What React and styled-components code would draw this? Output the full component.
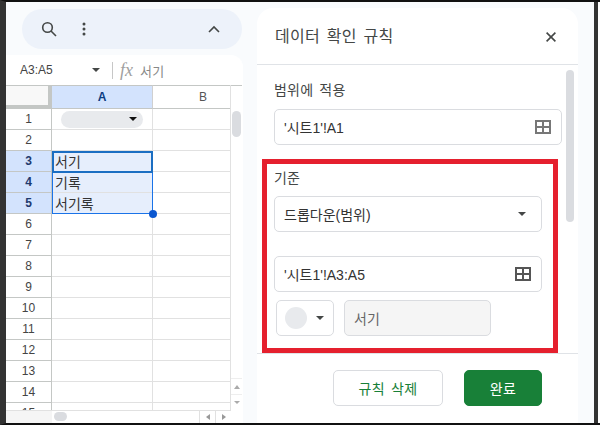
import React from "react";
import styled, { createGlobalStyle } from "styled-components";

const Global = createGlobalStyle`
  html, body { margin: 0; padding: 0; background: #fff; }
  * { box-sizing: border-box; }
`;

const FONT = `"Liberation Sans", "Noto Sans CJK KR", sans-serif`;

const Frame = styled.div`
  width: 600px;
  height: 425px;
  background: #fff;
  border-top: 2px solid #111;
  border-bottom: 2px solid #111;
  border-left: 6px solid #333;
  padding-right: 2px;
  font-family: ${FONT};
  overflow: hidden;
`;

const Screen = styled.div`
  display: flex;
  height: 100%;
  background: #f9fbfd;
  border-right: 4px solid #333;
`;

const LeftColumn = styled.div`
  width: 237px;
  flex: none;
  display: flex;
  flex-direction: column;
`;

const Pill = styled.div`
  margin: 7px 0 0 16px;
  width: 220px;
  height: 40px;
  flex: none;
  border-radius: 20px;
  background: #edf2fa;
  display: flex;
  align-items: center;
  padding: 0 22px 0 19px;
  color: #444746;
`;

const PillGap = styled.div`
  width: 25px;
`;

const Sheet = styled.div`
  margin-top: 6px;
  flex: 1;
  background: #fff;
  border-top-right-radius: 12px;
  display: flex;
  flex-direction: column;
  min-height: 0;
`;

const FormulaBar = styled.div`
  height: 30px;
  flex: none;
  display: flex;
  align-items: center;
  padding-left: 14px;
  color: #444746;
  font-size: 12px;
`;

const NameBox = styled.div`
  width: 72px;
  color: #444;
`;

const Caret = styled.span`
  width: 0;
  height: 0;
  flex: none;
  border-left: ${p => p.$size || 4}px solid transparent;
  border-right: ${p => p.$size || 4}px solid transparent;
  border-top: ${p => p.$size || 4}px solid ${p => p.$color || "#444746"};
`;

const Divider = styled.div`
  width: 1px;
  height: 17px;
  background: #c7c7c7;
  margin: 0 7px 0 12px;
`;

const Fx = styled.span`
  font-family: "Liberation Serif", serif;
  font-style: italic;
  font-size: 18px;
  color: #a0a0a0;
  margin-right: 7px;
  line-height: 18px;
`;

const FormulaText = styled.span`
  color: #888;
  font-size: 13px;
  letter-spacing: 0.3px;
`;

const GridRow = styled.div`
  flex: 1;
  min-height: 0;
  display: flex;
`;

const GridWrap = styled.div`
  position: relative;
`;

const Grid = styled.div`
  width: 225px;
  height: 325px;
  overflow: hidden;
  border-right: 1px solid #e1e1e1;
  display: grid;
  grid-template-columns: 46px 101px 101px;
  grid-auto-rows: 21px;
  grid-template-rows: 24px;
`;

const Corner = styled.div`
  background: #f8f8f8;
  border-right: 4px solid #c4c7c5;
  border-bottom: 4px solid #c4c7c5;
  border-top: 1px solid #c4c7c5;
`;

const ColHead = styled.div`
  display: flex;
  align-items: center;
  justify-content: center;
  font-size: 12px;
  border-top: 1px solid #c4c7c5;
  border-right: 1px solid #d0d0d0;
  border-bottom: 1px solid #c4c7c5;
  background: ${p => (p.$active ? "#d3e3fd" : "#fff")};
  color: ${p => (p.$active ? "#0b3d82" : "#555")};
  font-weight: ${p => (p.$active ? 700 : 400)};
`;

const RowHead = styled.div`
  display: flex;
  align-items: center;
  justify-content: center;
  font-size: 12px;
  border-right: 1px solid #c4c7c5;
  border-bottom: 1px solid #c4c7c5;
  background: ${p => (p.$active ? "#d3e3fd" : "#fff")};
  color: ${p => (p.$active ? "#1f3a6e" : "#444")};
  font-weight: ${p => (p.$active ? 700 : 400)};
`;

const Cell = styled.div`
  position: relative;
  display: flex;
  align-items: center;
  padding-left: 3px;
  font-size: 14px;
  color: #333;
  border-right: 1px solid #e1e1e1;
  border-bottom: 1px solid #e1e1e1;
  background: ${p => (p.$selected ? "#e6eefc" : "#fff")};
`;

const ChipCell = styled(Cell)`
  justify-content: center;
  padding-left: 0;
`;

const Chip = styled.div`
  width: 82px;
  height: 17px;
  border-radius: 9px;
  background: #e8eaed;
  display: flex;
  align-items: center;
  justify-content: flex-end;
  padding-right: 6px;
`;

const Selection = styled.div`
  position: absolute;
  left: 46px;
  top: 66px;
  width: 101px;
  height: 63px;
  border: 1px solid #1a73e8;
  pointer-events: none;
`;

const ActiveCell = styled.div`
  position: absolute;
  left: -1px;
  top: -1px;
  width: 101px;
  height: 22px;
  border: 2px solid #1b6ec2;
`;

const Handle = styled.div`
  position: absolute;
  right: -5px;
  bottom: -5px;
  width: 8px;
  height: 8px;
  border-radius: 50%;
  background: #0b57d0;
`;

const VScroll = styled.div`
  width: 11px;
  display: flex;
  flex-direction: column;
  padding-top: 25px;
  border-top: 1px solid #c4c7c5;
  background: #fff;
`;

const VThumb = styled.div`
  width: 9px;
  height: 26px;
  border-radius: 5px;
  background: #dadce0;
  margin-left: 1px;
`;

const VSpacer = styled.div`
  flex: 1;
`;

const ArrowBtn = styled.div`
  height: 16px;
  display: flex;
  align-items: center;
  justify-content: center;
  border-top: 1px solid #eee;
`;

const ArrowUp = styled.span`
  border-left: 3px solid transparent;
  border-right: 3px solid transparent;
  border-bottom: 4px solid #aaa;
`;

const HBar = styled.div`
  height: 13px;
  flex: none;
  display: flex;
  background: #fafafa;
  border-top: 1px solid #e1e1e1;
  width: 225px;
`;

const HBarLead = styled.div`
  width: 46px;
  background: #f5f5f5;
`;

const HBarTrack = styled.div`
  flex: 1;
  background: #fff;
  padding: 1px 0 0 2px;
`;

const HThumb = styled.div`
  width: 13px;
  height: 9px;
  border-radius: 5px;
  background: #dadce0;
`;

const HBtn = styled.div`
  width: 16px;
  display: flex;
  align-items: center;
  justify-content: center;
  border-left: 1px solid #e1e1e1;
  background: #fff;
`;

const ArrowSide = styled.span`
  border-top: 3px solid transparent;
  border-bottom: 3px solid transparent;
  ${p => (p.$left ? "border-right" : "border-left")}: 4px solid #999;
`;

const Panel = styled.div`
  margin: 6px 0 0 14px;
  width: 321px;
  flex: none;
  background: #fff;
  border-radius: 16px 16px 0 0;
  display: flex;
  flex-direction: column;
`;

const PanelHead = styled.div`
  height: 57px;
  flex: none;
  display: flex;
  align-items: center;
  justify-content: space-between;
  padding: 0 22px 2px 18px;
  border-bottom: 1px solid #e0e3e7;
`;

const PanelTitle = styled.div`
  font-size: 16px;
  color: #444746;
  letter-spacing: 0.3px;
  word-spacing: 2px;
`;

const CloseBtn = styled.div`
  display: flex;
  margin-top: 4px;
`;

const PanelBody = styled.div`
  flex: 1;
  position: relative;
  display: flex;
  flex-direction: column;
  padding: 15px 0 0 17px;
  min-height: 0;
`;

const SideThumb = styled.div`
  position: absolute;
  right: 4px;
  top: 5px;
  width: 8px;
  height: 152px;
  border-radius: 4px;
  background: #dadce0;
`;

const Label = styled.div`
  font-size: 14px;
  color: #444746;
  height: 20px;
  line-height: 20px;
  letter-spacing: 0.2px;
  word-spacing: 2px;
`;

const Field = styled.div`
  width: ${p => p.$w}px;
  height: 36px;
  margin-top: ${p => p.$mt || 0}px;
  border: 1px solid #dadce0;
  border-radius: 5px;
  background: #fff;
  display: flex;
  align-items: center;
  justify-content: space-between;
  padding: 0 ${p => p.$pr || 10}px 0 9px;
  font-size: 14px;
  color: #333;
`;

const Highlight = styled.div`
  margin: 14px 0 0 -12px;
  width: 296px;
  height: 194px;
  flex: none;
  border: 5px solid #e5202e;
  padding: 4px 0 0 7px;
`;

const ColorRow = styled.div`
  display: flex;
  gap: 10px;
  margin: 8px 0 0 2px;
`;

const ColorButton = styled.div`
  width: 58px;
  height: 36px;
  border: 1px solid #dadce0;
  border-radius: 5px;
  display: flex;
  align-items: center;
  gap: 9px;
  padding-left: 8px;
`;

const Swatch = styled.div`
  width: 22px;
  height: 22px;
  border-radius: 50%;
  background: #e8eaed;
`;

const ValueInput = styled.div`
  width: 147px;
  height: 36px;
  border: 1px solid #dadce0;
  border-radius: 5px;
  background: #f5f5f5;
  display: flex;
  align-items: center;
  padding-left: 9px;
  font-size: 14px;
  color: #666;
`;

const Footer = styled.div`
  height: 70px;
  flex: none;
  display: flex;
  align-items: flex-start;
  gap: 21px;
  padding: 16px 0 0 76px;
  border-top: 1px solid #e0e3e7;
`;

const Button = styled.div`
  height: 36px;
  width: ${p => p.$w}px;
  border-radius: 5px;
  display: flex;
  align-items: center;
  justify-content: center;
  font-size: 14px;
  letter-spacing: 0.3px;
  word-spacing: 2px;
  border: 1px solid ${p => (p.$primary ? "#188038" : "#dadce0")};
  background: ${p => (p.$primary ? "#188038" : "#fff")};
  color: ${p => (p.$primary ? "#fff" : "#188038")};
`;

const SearchIcon = () => (
  <svg width="16" height="16" viewBox="0 0 16 16" fill="none" stroke="#444746" strokeWidth="1.6">
    <circle cx="6.5" cy="6.5" r="4.8" />
    <path d="M10 10l5 5" />
  </svg>
);

const DotsIcon = () => (
  <svg width="4" height="14" viewBox="0 0 4 14" fill="#444746">
    <circle cx="2" cy="2" r="1.5" />
    <circle cx="2" cy="7" r="1.5" />
    <circle cx="2" cy="12" r="1.5" />
  </svg>
);

const ChevronUp = () => (
  <svg width="12" height="8" viewBox="0 0 12 8" fill="none" stroke="#444746" strokeWidth="1.6">
    <path d="M1 7l5-5 5 5" />
  </svg>
);

const CloseIcon = () => (
  <svg width="10" height="10" viewBox="0 0 10 10" fill="none" stroke="#444746" strokeWidth="1.6">
    <path d="M.6.6l8.8 8.8M9.4.6L.6 9.4" />
  </svg>
);

const GridIcon = ({ color }) => (
  <svg width="16" height="14" viewBox="0 0 16 14" fill="none" stroke={color} strokeWidth="2">
    <rect x="1" y="1" width="14" height="12" />
    <path d="M8 1v12M1 7h14" />
  </svg>
);

const rows = [1, 2, 3, 4, 5, 6, 7, 8, 9, 10, 11, 12, 13, 14, 15];
const values = { 3: "서기", 4: "기록", 5: "서기록" };

export default function App() {
  return (
    <Frame>
      <Global />
      <Screen>
        <LeftColumn>
          <Pill>
            <SearchIcon />
            <PillGap />
            <DotsIcon />
            <VSpacer />
            <ChevronUp />
          </Pill>
          <Sheet>
            <FormulaBar>
              <NameBox>A3:A5</NameBox>
              <Caret />
              <Divider />
              <Fx>fx</Fx>
              <FormulaText>서기</FormulaText>
            </FormulaBar>
            <GridRow>
              <GridWrap>
                <Grid>
                  <Corner />
                  <ColHead $active>A</ColHead>
                  <ColHead>B</ColHead>
                  {rows.map(n => (
                    <React.Fragment key={n}>
                      <RowHead $active={n >= 3 && n <= 5}>{n}</RowHead>
                      {n === 1 ? (
                        <ChipCell>
                          <Chip>
                            <Caret $color="#111" />
                          </Chip>
                        </ChipCell>
                      ) : (
                        <Cell $selected={n >= 3 && n <= 5}>{values[n]}</Cell>
                      )}
                      <Cell />
                    </React.Fragment>
                  ))}
                </Grid>
                <Selection>
                  <ActiveCell />
                  <Handle />
                </Selection>
              </GridWrap>
              <VScroll>
                <VThumb />
                <VSpacer />
                <ArrowBtn>
                  <ArrowUp />
                </ArrowBtn>
                <ArrowBtn>
                  <Caret $size={3} $color="#aaa" />
                </ArrowBtn>
              </VScroll>
            </GridRow>
            <HBar>
              <HBarLead />
              <HBarTrack>
                <HThumb />
              </HBarTrack>
              <HBtn>
                <ArrowSide $left />
              </HBtn>
              <HBtn>
                <ArrowSide />
              </HBtn>
            </HBar>
          </Sheet>
        </LeftColumn>
        <Panel>
          <PanelHead>
            <PanelTitle>데이터 확인 규칙</PanelTitle>
            <CloseBtn>
              <CloseIcon />
            </CloseBtn>
          </PanelHead>
          <PanelBody>
            <SideThumb />
            <Label>범위에 적용</Label>
            <Field $w={288} $mt={9} $pr={10}>
              '시트1'!A1
              <GridIcon color="#777" />
            </Field>
            <Highlight>
              <Label>기준</Label>
              <Field $w={268} $mt={8} $pr={15}>
                드롭다운(범위)
                <Caret $size={4} />
              </Field>
              <Field $w={268} $mt={24}>
                '시트1'!A3:A5
                <GridIcon color="#555" />
              </Field>
              <ColorRow>
                <ColorButton>
                  <Swatch />
                  <Caret />
                </ColorButton>
                <ValueInput>서기</ValueInput>
              </ColorRow>
            </Highlight>
          </PanelBody>
          <Footer>
            <Button $w={110}>규칙 삭제</Button>
            <Button $w={78} $primary>완료</Button>
          </Footer>
        </Panel>
      </Screen>
    </Frame>
  );
}
